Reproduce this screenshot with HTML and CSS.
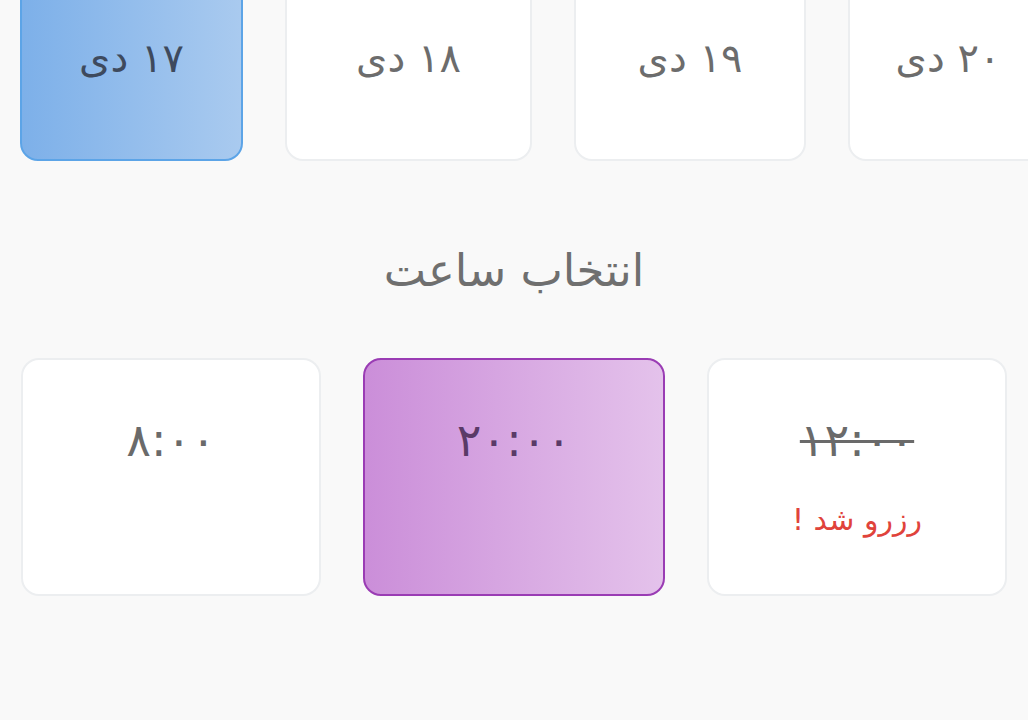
FILE: index.html
```html
<!DOCTYPE html>
<html lang="fa">
<head>
<meta charset="utf-8">
<link rel="stylesheet" href="styles.css">
</head>
<body>
<div class="page">
  <div class="dates">
    <div class="card date selected w1"><span class="label">۱۷ دی</span></div>
    <div class="card date w2"><span class="label">۱۸ دی</span></div>
    <div class="card date w3"><span class="label">۱۹ دی</span></div>
    <div class="card date w4"><span class="label">۲۰ دی</span></div>
  </div>
  <h2 class="title">انتخاب ساعت</h2>
  <div class="times">
    <div class="card time"><span class="tlabel">۸:۰۰</span></div>
    <div class="card time chosen"><span class="tlabel">۲۰:۰۰</span></div>
    <div class="card time booked"><span class="tlabel strike">۱۲:۰۰</span><span class="note">رزرو شد !</span></div>
  </div>
</div>
</body>
</html>
```

FILE: styles.css
```css
html, body {
  margin: 0;
  padding: 0;
  background: #f9f9f9;
  overflow: hidden;
}
.page {
  width: 1028px;
  height: 720px;
  overflow: hidden;
  font-family: "DejaVu Sans", "Noto Sans", sans-serif;
}
.dates {
  display: flex;
  gap: 42px;
  padding-left: 20px;
  margin-top: -39px;
  height: 200px;
}
.card {
  box-sizing: border-box;
  border: 2px solid #eceef0;
  background: #ffffff;
  border-radius: 18px;
  flex: none;
  display: flex;
  flex-direction: column;
  align-items: center;
}
.date {
  height: 200px;
  padding-top: 65px;
}
.w1 { width: 223px; }
.w2 { width: 247px; }
.w3 { width: 232px; }
.w4 { width: 200px; }
.label {
  direction: rtl;
  font-size: 40px;
  line-height: 60px;
  color: #6c6c6c;
}
.date.selected {
  border-color: #5ca4e7;
  background: linear-gradient(to right, #7db0e9, #a9caef);
}
.date.selected .label {
  color: #3e4a5d;
}
.title {
  box-sizing: border-box;
  margin: 0;
  height: 197px;
  padding-top: 22px;
  display: flex;
  align-items: center;
  justify-content: center;
  direction: rtl;
  font-weight: normal;
  font-size: 45px;
  color: #6f6f6f;
}
.times {
  display: flex;
  gap: 42px;
  padding-left: 21px;
}
.time {
  width: 300px;
  height: 238px;
  padding-top: 46px;
}
.time.chosen {
  width: 302px;
  border-color: #9a3cb4;
  background: linear-gradient(to right, #cb8ed9, #e4c2eb);
}
.tlabel {
  direction: rtl;
  font-size: 46px;
  line-height: 69px;
  color: #6a6a6a;
}
.chosen .tlabel {
  color: #5a3a67;
}
.strike {
  text-decoration: line-through;
  text-decoration-thickness: 3px;
}
.note {
  direction: rtl;
  margin-top: 22px;
  font-size: 30px;
  line-height: 45px;
  color: #e0433b;
}
```
